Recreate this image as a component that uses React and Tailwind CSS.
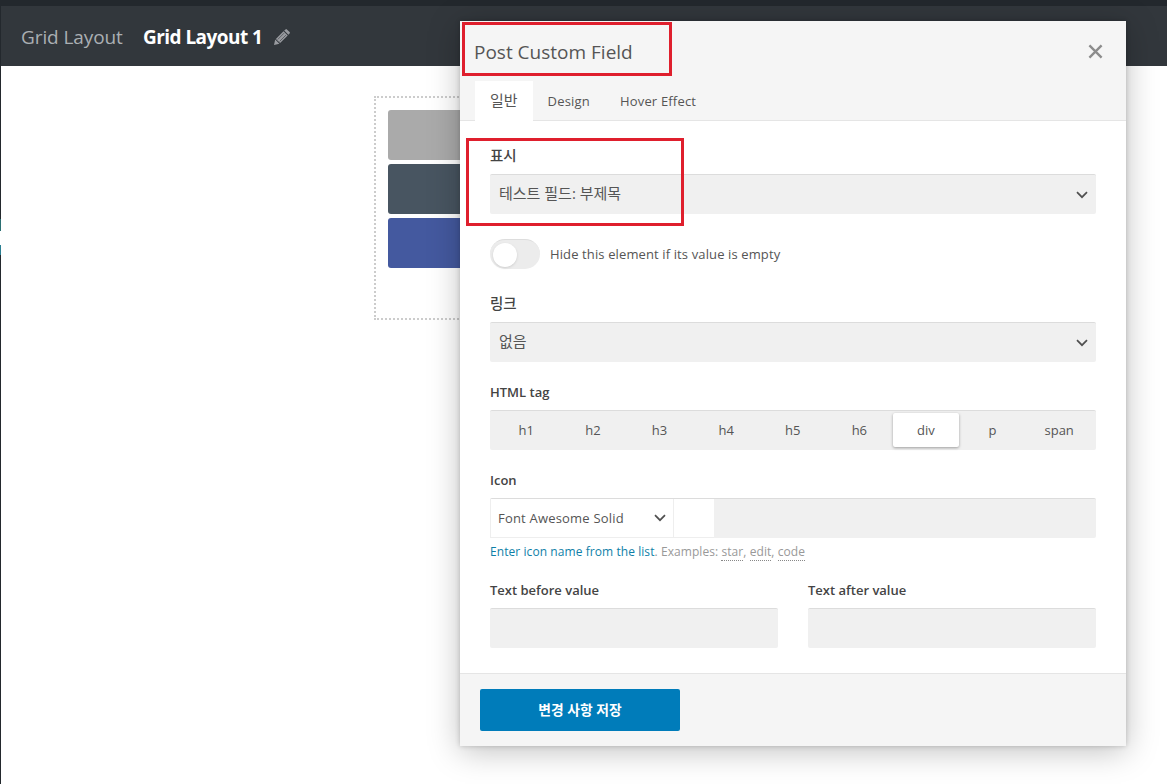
import { useState } from "react";

const TABS = ["일반", "Design", "Hover Effect"];
const TAGS = ["h1", "h2", "h3", "h4", "h5", "h6", "div", "p", "span"];

function Chevron() {
  return (
    <svg width="12" height="8" viewBox="0 0 12 8" fill="none" stroke="#505050" strokeWidth="1.7">
      <path d="M1 1.2 L6 6.2 L11 1.2" />
    </svg>
  );
}

function Field({ label, korean = false, className = "", children }) {
  return (
    <div className={className}>
      <div
        className={`h-5 mb-2 whitespace-nowrap text-[#444] ${
          korean ? "text-[14.5px] leading-5 font-medium" : "leading-5 font-semibold"
        }`}
      >
        {label}
      </div>
      {children}
    </div>
  );
}

function Select({ value }) {
  return (
    <button className="flex w-full h-10 items-center justify-between rounded-xs bg-[#f0f0f0] border-t border-[#dcdcdc] pl-[9px] pr-2">
      <span className="pb-0.5 text-[15px]">{value}</span>
      <Chevron />
    </button>
  );
}

function ElementBox() {
  return (
    <div className="mt-[30px] ml-[373px] w-[420px] h-56 border-2 border-dotted border-[#ccc] p-3 flex flex-col gap-1">
      <div className="h-[50px] shrink-0 rounded-[3px] bg-[#aaa]" />
      <div className="h-[50px] shrink-0 rounded-[3px] bg-[#485561]" />
      <div className="h-[50px] shrink-0 rounded-[3px] bg-[#44599f]" />
    </div>
  );
}

export default function App() {
  const [activeTab, setActiveTab] = useState("일반");
  const [tag, setTag] = useState("div");
  const [hideEmpty, setHideEmpty] = useState(false);

  return (
    <div className="relative h-[784px] w-[1167px] overflow-hidden bg-white text-[13px] text-[#555] font-['Open_Sans','Noto_Sans_CJK_KR',sans-serif]">
      {/* Page behind the popup */}
      <div className="h-[6px] bg-[#23282d]" />
      <div className="flex h-[778px]">
        {/* Collapsed admin menu edge */}
        <div className="w-px bg-[#23282d] pt-[213px]">
          <div className="h-3 bg-[#2b6f72]" />
          <div className="h-[14px] bg-white" />
          <div className="h-[10px] bg-[#2b7f92]" />
        </div>
        <div className="flex-1">
          <div className="flex h-[60px] items-center bg-[#32373c] pl-5 pt-0.5 text-[19px] whitespace-nowrap">
            <span className="w-[122px] text-[#aaafb3] tracking-[-0.1px]">Grid Layout</span>
            <span className="w-[131px] font-bold text-white tracking-[-0.55px]">Grid Layout 1</span>
            <svg width="16" height="16" viewBox="0 0 16 16" fill="#999ba0">
              <path d="M0 16 L1.2 10.6 L5.4 14.8 Z M1.9 9.9 L9.5 2.3 L13.7 6.5 L6.1 14.1 Z M10.2 1.6 L11.5 0.4 Q12.2 -0.2 12.9 0.4 L15.6 3.1 Q16.2 3.8 15.6 4.5 L14.4 5.8 Z" />
              <path d="M3.7 10.5 L10 4.2 M5.6 12.4 L11.9 6.1" stroke="#32373c" strokeWidth="0.6" />
            </svg>
          </div>
          <ElementBox />
        </div>
      </div>

      {/* Popup */}
      <div className="absolute left-[460px] top-[21px] w-[666px] h-[725px] flex flex-col bg-white shadow-[0_5px_30px_rgba(0,0,0,0.25),0_0_5px_rgba(0,0,0,0.2)]">
        <div className="h-[100px] shrink-0 flex flex-col justify-between bg-[#f5f5f5] border-b border-[#e5e5e5]">
          <div className="flex h-[60px] items-center justify-between pl-[14px] pr-[23px]">
            <h2 className="pt-0.5 text-[19px] whitespace-nowrap">Post Custom Field</h2>
            <svg width="15" height="15" viewBox="0 0 16 16" stroke="#8c8c8c" strokeWidth="2.5">
              <path d="M1.5 1.5 L14.5 14.5 M14.5 1.5 L1.5 14.5" />
            </svg>
          </div>
          <div className="flex -mb-px pl-[15px]">
            {TABS.map((name) => (
              <button
                key={name}
                onClick={() => setActiveTab(name)}
                className={`h-10 px-[15px] whitespace-nowrap ${
                  name === activeTab ? "bg-white text-[15px] pb-0.5" : "pt-0.5 tracking-[0.18px]"
                }`}
              >
                {name}
              </button>
            ))}
          </div>
        </div>

        <div className="flex-1 px-[30px] pt-[25px]">
          <Field label="표시" korean>
            <Select value="테스트 필드: 부제목" />
          </Field>

          <div className="flex items-center gap-[10px] my-[25px] whitespace-nowrap">
            <button
              onClick={() => setHideEmpty(!hideEmpty)}
              className={`flex w-[50px] h-[30px] items-center rounded-full bg-[#ececec] border-t border-[#ddd] px-[3px] ${hideEmpty ? "justify-end" : ""}`}
            >
              <span className="size-6 rounded-full bg-white shadow-sm" />
            </button>
            <span className="pt-0.5 tracking-[0.12px]">Hide this element if its value is empty</span>
          </div>

          <Field label="링크" korean>
            <Select value="없음" />
          </Field>

          <Field label="HTML tag" className="mt-5">
            <div className="flex h-10 rounded-xs bg-[#f0f0f0] border-t border-[#dcdcdc] pl-[3px] pr-[3.5px] pt-[2px] pb-[3px]">
              {TAGS.map((t) => (
                <button
                  key={t}
                  onClick={() => setTag(t)}
                  className={`flex-1 pt-px ${t === tag ? "rounded-xs bg-white shadow-[0_1px_3px_rgba(0,0,0,0.35)]" : ""}`}
                >
                  {t}
                </button>
              ))}
            </div>
          </Field>

          <Field label="Icon" className="mt-5">
            <div className="flex h-10 rounded-xs bg-[#f0f0f0] border-t border-[#dcdcdc]">
              <button className="flex w-[184px] items-center justify-between border-x border-b border-[#eee] bg-white px-[7px] whitespace-nowrap tracking-[0.2px]">
                <span className="pt-0.5">Font Awesome Solid</span>
                <Chevron />
              </button>
              <div className="w-10 border-b border-[#eee] bg-white" />
            </div>
            <p className="mt-1 h-5 text-xs leading-5 whitespace-nowrap tracking-[0.07px] text-[#999]">
              <a className="text-[#0f7fa8]">Enter icon name from the list</a>. Examples:{" "}
              <span className="border-b border-dotted border-[#888]">star</span>,{" "}
              <span className="border-b border-dotted border-[#888]">edit</span>,{" "}
              <span className="border-b border-dotted border-[#888]">code</span>
            </p>
          </Field>

          <div className="mt-[18px] flex gap-[30px]">
            <Field label="Text before value" className="flex-1">
              <div className="h-10 rounded-xs bg-[#f0f0f0] border-t border-[#dcdcdc]" />
            </Field>
            <Field label="Text after value" className="flex-1">
              <div className="h-10 rounded-xs bg-[#f0f0f0] border-t border-[#dcdcdc]" />
            </Field>
          </div>
        </div>

        <div className="h-[73px] shrink-0 bg-[#f5f5f5] border-t border-[#e5e5e5] px-5 pt-[15px]">
          <button className="h-[42px] w-[200px] rounded-xs bg-[#007cba] text-[13.8px] font-bold text-white">변경 사항 저장</button>
        </div>
      </div>

      {/* Highlight frames */}
      <div className="absolute left-[462px] top-[22px] w-[210px] h-[54px] border-3 border-[#df1f2d]" />
      <div className="absolute left-[466px] top-[138px] w-[218px] h-[88px] border-3 border-[#df1f2d]" />
    </div>
  );
}
